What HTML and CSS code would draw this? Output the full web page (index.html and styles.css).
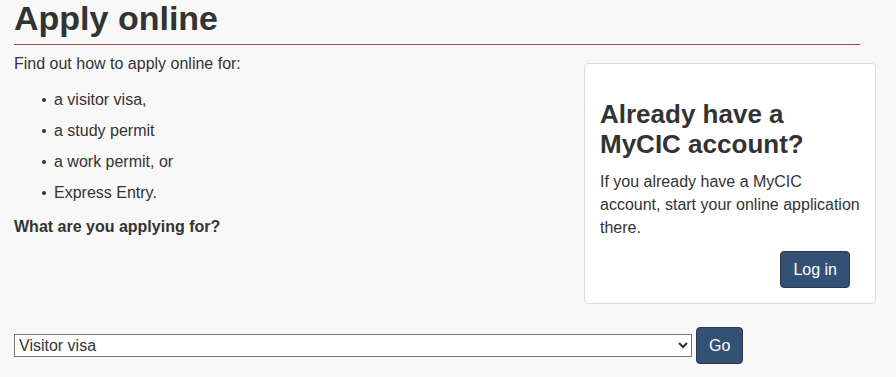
FILE: index.html
```html
<!DOCTYPE html>
<html lang="en">
<head>
    <meta charset="UTF-8">
    <meta name="viewport" content="width=device-width, initial-scale=1.0">
    <title>Apply online</title>
    <link rel="stylesheet" href="styles.css">
</head>
<body>
    <main class="page">
        <h1 class="page-title">Apply online</h1>

        <div class="row">
            <div class="intro">
                <p>Find out how to apply online for:</p>
                <ul class="apply-list">
                    <li>a visitor visa,</li>
                    <li>a study permit</li>
                    <li>a work permit, or</li>
                    <li>Express Entry.</li>
                </ul>
                <p class="question">What are you applying for?</p>
            </div>

            <aside class="panel">
                <h2>Already have a MyCIC account?</h2>
                <p>If you already have a MyCIC account, start your online application there.</p>
                <div class="panel-actions">
                    <button class="btn">Log in</button>
                </div>
            </aside>
        </div>

        <form class="apply-form" onsubmit="return false;">
            <select class="apply-select" aria-label="What are you applying for?">
                <option>Visitor visa</option>
                <option>Study permit</option>
                <option>Work permit</option>
                <option>Express Entry</option>
            </select>
            <button class="btn" type="submit">Go</button>
        </form>
    </main>
</body>
</html>
```

FILE: styles.css
```css
* {
    box-sizing: border-box;
}

body {
    margin: 0;
    background: #f8f8f8;
    color: #333;
    font-family: "Liberation Sans", Arial, sans-serif;
    font-size: 16px;
    line-height: 23px;
}

.page {
    padding: 0 20px 0 14px;
}

.page-title {
    font-size: 34px;
    line-height: 37px;
    font-weight: 700;
    margin: 0 16px 7px 0;
    padding-bottom: 7px;
    border-bottom: 1px solid #a8434a;
}

p {
    margin: 0 0 11.5px;
}

.row {
    display: flex;
    align-items: flex-start;
}

.intro {
    flex: 1;
}

.apply-list {
    margin: 13px 0 11px;
    padding-left: 40px;
    list-style: none;
}

.apply-list li {
    position: relative;
}

/* small bullet, like the reference */
.apply-list li::before {
    content: "";
    position: absolute;
    left: -12px;
    top: 10px;
    width: 4px;
    height: 4px;
    border-radius: 50%;
    background: #333;
}

.apply-list li + li {
    margin-top: 8px;
}

.question {
    font-weight: 700;
}

.panel {
    width: 292px;
    margin-top: 11px;
    background: white;
    border: 1px solid #ddd;
    border-radius: 4px;
    padding: 15px;
}

.panel h2 {
    font-size: 26px;
    line-height: 30px;
    font-weight: 700;
    margin: 20px 0 11px;
}

.panel-actions {
    text-align: right;
    padding-right: 10px;
}

.btn {
    background: #335075;
    color: white;
    border: 1px solid #26374a;
    border-radius: 4px;
    padding: 6px 12px;
    font-family: inherit;
    font-size: 16px;
    line-height: 23px;
    cursor: pointer;
}

.btn:hover {
    background: #26374a;
}

.apply-form {
    display: flex;
    align-items: center;
    gap: 4px;
    margin-top: 23px;
}

.apply-select {
    width: 678px;
    height: 23px;
    font-family: inherit;
    font-size: 16px;
    color: #333;
    background: white;
    border: 1px solid #767676;
    border-radius: 0;
}
```
